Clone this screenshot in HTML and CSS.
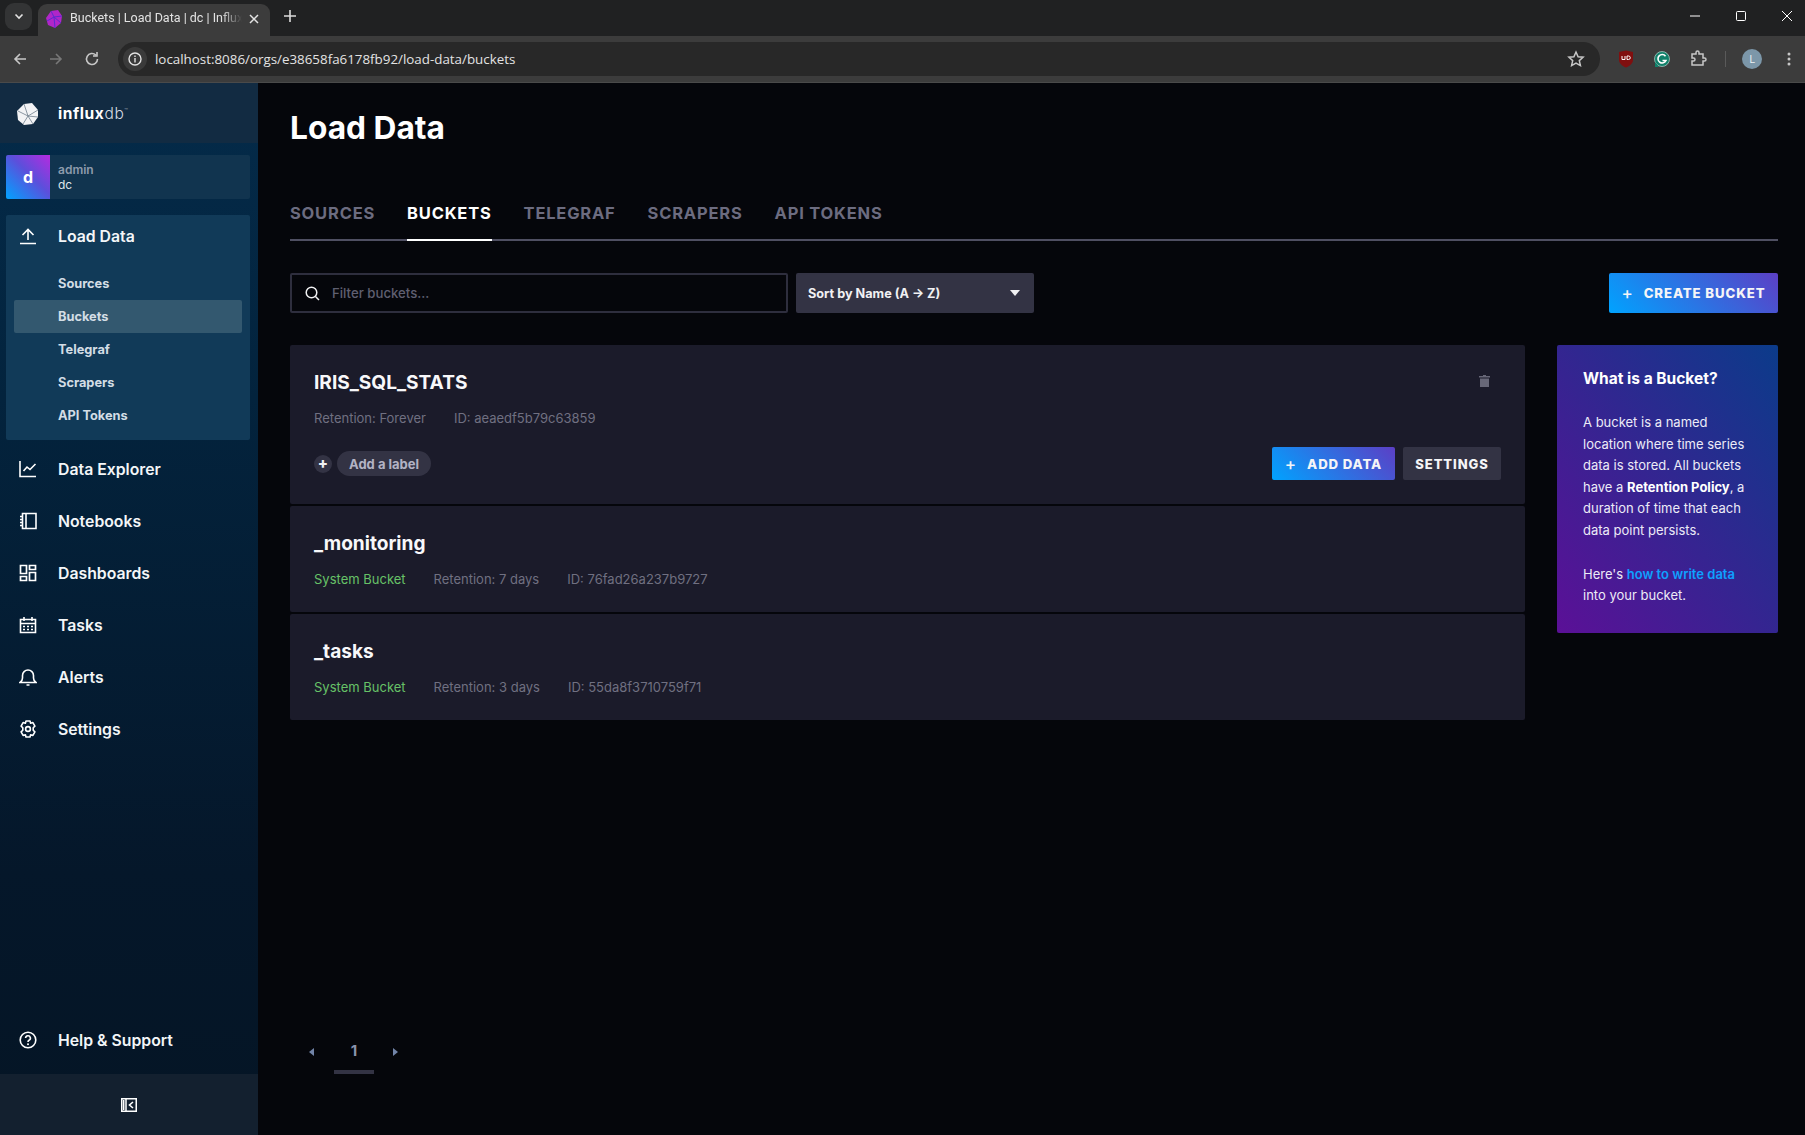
FILE: index.html
```html
<!DOCTYPE html>
<html lang="en">
<head>
    <meta charset="UTF-8">
    <title>Buckets | Load Data | dc | InfluxDB</title>
    <link rel="stylesheet" href="styles.css">
</head>
<body>
    <div class="browser">
        <div class="tabstrip">
            <div class="tab-search">
                <svg width="12" height="12" viewBox="0 0 12 12"><path d="M2.500 4.500 6 8l3.500-3.500" fill="none" stroke="#e3e3e3" stroke-width="1.600"/></svg>
            </div>
            <div class="tab">
                <svg class="favicon" width="17" height="18" viewBox="0 0 17 18"><path d="M5 1l7-1 4 6-1 7-6 5-7-3-2-7z" fill="#b026c9"/><path d="M5 1l3 6 8-1M8 7l-7 4M8 7l1 11M8 7l7 6" fill="none" stroke="#5a2bd0" stroke-width="1"/></svg>
                <span class="tab-title">Buckets | Load Data | dc | InfluxDB</span>
                <svg class="tab-close" width="12" height="12" viewBox="0 0 12 12"><path d="M2 2l8 8M10 2l-8 8" stroke="#e3e3e3" stroke-width="1.500"/></svg>
            </div>
            <svg class="new-tab" width="14" height="14" viewBox="0 0 14 14"><path d="M7 1v12M1 7h12" stroke="#dcdcdc" stroke-width="1.600"/></svg>
            <div class="window-controls">
                <svg width="12" height="12" viewBox="0 0 12 12"><path d="M1 6h10" stroke="#fff"/></svg>
                <svg width="12" height="12" viewBox="0 0 12 12"><rect x="1.500" y="1.500" width="9" height="9" rx="1" fill="none" stroke="#fff"/></svg>
                <svg width="12" height="12" viewBox="0 0 12 12"><path d="M1 1l10 10M11 1L1 11" stroke="#fff"/></svg>
            </div>
        </div>
        <div class="toolbar">
            <svg class="tool" width="16" height="16" viewBox="0 0 16 16"><path d="M14 8H3M8 3L3 8l5 5" fill="none" stroke="#c7c7c7" stroke-width="1.600"/></svg>
            <svg class="tool" width="16" height="16" viewBox="0 0 16 16"><path d="M2 8h11M8 3l5 5-5 5" fill="none" stroke="#787878" stroke-width="1.600"/></svg>
            <svg class="tool" width="16" height="16" viewBox="0 0 16 16"><path d="M13.500 8A5.500 5.500 0 1 1 11.800 4M13 1v4H9" fill="none" stroke="#c7c7c7" stroke-width="1.600"/></svg>
            <div class="urlbar">
                <span class="site-info">
                    <svg width="16" height="16" viewBox="0 0 16 16"><circle cx="8" cy="8" r="6" fill="none" stroke="#e3e3e3" stroke-width="1.400"/><path d="M8 7v4.500M8 4.500v1.400" stroke="#e3e3e3" stroke-width="1.400"/></svg>
                </span>
                <span class="url">localhost:8086/orgs/e38658fa6178fb92/load-data/buckets</span>
                <svg class="star" width="18" height="18" viewBox="0 0 18 18"><path d="M9 2l2.100 4.700 5 .5-3.800 3.400 1.100 5L9 13l-4.400 2.600 1.100-5L1.900 7.200l5-.5z" fill="none" stroke="#c7c7c7" stroke-width="1.500"/></svg>
            </div>
            <div class="extensions">
                <svg width="16" height="18" viewBox="0 0 16 18"><path d="M1 2l7-1.500L15 2v8c0 3.500-3.500 6-7 7.500C4.500 16 1 13.500 1 10z" fill="#800f0f"/><path d="M4 6v3.500h3V6M9 6v3.500h1.500a1.700 1.700 0 0 0 0-3.500z" fill="none" stroke="#fff" stroke-width="1"/></svg>
                <svg width="16" height="16" viewBox="0 0 16 16"><circle cx="8" cy="8" r="7.500" fill="#11806a" stroke="#cfe9e2" stroke-width=".6"/><path d="M11.500 5.200A4.200 4.200 0 1 0 12 9.500H8.500" fill="none" stroke="#fff" stroke-width="1.600"/><path d="M1 11l0 5h4z" fill="#11806a"/></svg>
                <svg width="17" height="17" viewBox="0 0 17 17"><path d="M2 4h4V2.500a1.500 1.500 0 0 1 3 0V4h4v4h1.500a1.500 1.500 0 0 1 0 3H13v4H2v-4h1.500a1.500 1.500 0 0 0 0-3H2z" fill="none" stroke="#c7c7c7" stroke-width="1.500"/></svg>
                <span class="toolbar-sep"></span>
                <span class="profile">L</span>
                <svg width="4" height="14" viewBox="0 0 4 14"><circle cx="2" cy="2" r="1.500" fill="#c7c7c7"/><circle cx="2" cy="7" r="1.500" fill="#c7c7c7"/><circle cx="2" cy="12" r="1.500" fill="#c7c7c7"/></svg>
            </div>
        </div>
    </div>

    <div class="app">
        <aside class="sidebar">
            <div class="brand">
                <svg width="22" height="22" viewBox="0 0 22 22"><path d="M7 1l8-1 6 7 0 7-5 7-9 1-6-5-1-9z" fill="#f2f3f5"/><path d="M7 1l4 12 10-6M11 13L1 8M11 13l-5 8M11 13l5 8M11 13l10 1" fill="none" stroke="#6f7d8b" stroke-width=".8"/></svg>
                <span class="brand-name"><b>influx</b>db<sup>™</sup></span>
            </div>
            <div class="org">
                <div class="org-avatar">d</div>
                <div class="org-text">
                    <span class="org-user">admin</span>
                    <span class="org-name">dc</span>
                </div>
            </div>
            <div class="nav-open">
                <div class="nav-item">
                    <svg width="18" height="18" viewBox="0 0 18 18"><path d="M9 13V2.500M3.500 8 9 2.500 14.500 8M1 16.500h16" fill="none" stroke="#fff" stroke-width="1.600"/></svg>
                    Load Data
                </div>
                <div class="sub-list">
                    <div class="sub-item">Sources</div>
                    <div class="sub-item active">Buckets</div>
                    <div class="sub-item">Telegraf</div>
                    <div class="sub-item">Scrapers</div>
                    <div class="sub-item">API Tokens</div>
                </div>
            </div>
            <nav class="nav-main">
                <div class="nav-item">
                    <svg width="18" height="18" viewBox="0 0 18 18"><path d="M1 1v15.500h16M4.500 11 8 7l3 2.500L16.500 4" fill="none" stroke="#fff" stroke-width="1.600"/></svg>
                    Data Explorer
                </div>
                <div class="nav-item">
                    <svg width="18" height="18" viewBox="0 0 18 18"><path d="M3.500 1.500h13.500v15H3.500zM7 1.500v15M1 4.500h3M1 7.500h3M1 10.500h3M1 13.500h3" fill="none" stroke="#fff" stroke-width="1.600"/></svg>
                    Notebooks
                </div>
                <div class="nav-item">
                    <svg width="18" height="18" viewBox="0 0 18 18"><path d="M1.500 1.500h6v8h-6zM10.500 1.500h6v4h-6zM10.500 8.500h6v8h-6zM1.500 12.500h6v4h-6z" fill="none" stroke="#fff" stroke-width="1.700"/></svg>
                    Dashboards
                </div>
                <div class="nav-item">
                    <svg width="18" height="18" viewBox="0 0 18 18"><path d="M1.500 3.500h15v13h-15zM1.500 7.500h15M5 1v4M13 1v4" fill="none" stroke="#fff" stroke-width="1.600"/><path d="M4 10.500h2M8 10.500h2M12 10.500h2M4 13.500h2M8 13.500h2M12 13.500h2" stroke="#fff" stroke-width="1.400"/></svg>
                    Tasks
                </div>
                <div class="nav-item">
                    <svg width="18" height="18" viewBox="0 0 18 18"><path d="M1 14.500h16c-1.500-1-2.500-2-2.500-4.500V7.500a5.500 5.500 0 0 0-11 0V10c0 2.500-1 3.500-2.500 4.500zM7.500 17h3" fill="none" stroke="#fff" stroke-width="1.600"/></svg>
                    Alerts
                </div>
                <div class="nav-item">
                    <svg width="18" height="18" viewBox="0 0 18 18"><path d="M7 1h4l.6 2.300 2.300-.7 2 3.500-1.700 1.700v2.400l1.700 1.700-2 3.500-2.300-.7L11 17H7l-.6-2.300-2.300.7-2-3.500 1.700-1.700V7.800L2.100 6.100l2-3.500 2.300.7z" fill="none" stroke="#fff" stroke-width="1.600" stroke-linejoin="round"/><circle cx="9" cy="9" r="2.400" fill="none" stroke="#fff" stroke-width="1.600"/></svg>
                    Settings
                </div>
            </nav>
            <div class="nav-help nav-item">
                <svg width="18" height="18" viewBox="0 0 18 18"><circle cx="9" cy="9" r="7.800" fill="none" stroke="#fff" stroke-width="1.600"/><path d="M6.600 7a2.400 2.400 0 1 1 3.400 2.300c-.7.400-1 .8-1 1.700" fill="none" stroke="#fff" stroke-width="1.600"/><circle cx="9" cy="13.300" r="1" fill="#fff"/></svg>
                Help &amp; Support
            </div>
            <div class="collapse">
                <svg width="16" height="14" viewBox="0 0 16 14"><path d="M.75.75h14.500v12.500H.75zM5 1v12" fill="none" stroke="#fff" stroke-width="1.500"/><path d="M2.700 2v10" stroke="#fff" stroke-width="1.500"/><path d="M12 4 8.500 7l3.500 3" fill="none" stroke="#fff" stroke-width="1.600"/></svg>
            </div>
        </aside>

        <main class="main">
            <h1 class="page-title">Load Data</h1>
            <div class="tabs">
                <span class="tabs-item">Sources</span>
                <span class="tabs-item active">Buckets</span>
                <span class="tabs-item">Telegraf</span>
                <span class="tabs-item">Scrapers</span>
                <span class="tabs-item">API Tokens</span>
            </div>

            <div class="filters">
                <div class="search">
                    <svg width="15" height="15" viewBox="0 0 15 15"><circle cx="6.500" cy="6.500" r="5.300" fill="none" stroke="#f1f1f3" stroke-width="1.500"/><path d="M10.500 10.500 14 14" stroke="#f1f1f3" stroke-width="1.500"/></svg>
                    <span>Filter buckets...</span>
                </div>
                <div class="sort">
                    <span>Sort by Name (A → Z)</span>
                    <svg width="10" height="6" viewBox="0 0 10 6"><path d="M0 0h10L5 6z" fill="#f1f1f3"/></svg>
                </div>
                <button class="btn btn-primary btn-create"><span class="plus">+</span>Create Bucket</button>
            </div>

            <div class="content">
                <div class="bucket-list">
                    <div class="bucket">
                        <div class="bucket-head">
                            <div class="bucket-name">IRIS_SQL_STATS</div>
                            <svg class="trash" width="11" height="12" viewBox="0 0 11 12"><path d="M4 0h3v1h4v1.500H0V1h4zM1 3.500h9V12H1z" fill="#676777"/></svg>
                        </div>
                        <div class="bucket-meta">
                            <span>Retention: Forever</span>
                            <span>ID: aeaedf5b79c63859</span>
                        </div>
                        <div class="bucket-actions">
                            <span class="label-add">+</span>
                            <span class="label-pill">Add a label</span>
                            <button class="btn btn-primary btn-add"><span class="plus">+</span>Add Data</button>
                            <button class="btn btn-dark">Settings</button>
                        </div>
                    </div>
                    <div class="bucket">
                        <div class="bucket-name">_monitoring</div>
                        <div class="bucket-meta">
                            <span class="system">System Bucket</span>
                            <span>Retention: 7 days</span>
                            <span>ID: 76fad26a237b9727</span>
                        </div>
                    </div>
                    <div class="bucket">
                        <div class="bucket-name">_tasks</div>
                        <div class="bucket-meta">
                            <span class="system">System Bucket</span>
                            <span>Retention: 3 days</span>
                            <span>ID: 55da8f3710759f71</span>
                        </div>
                    </div>
                </div>
                <div class="info-panel">
                    <h5>What is a Bucket?</h5>
                    <p>A bucket is a named location where time series data is stored. All buckets have a <b>Retention Policy</b>, a duration of time that each data point persists.</p>
                    <p>Here's <a href="#">how to write data</a> into your bucket.</p>
                </div>
            </div>

            <div class="pagination">
                <span class="page-arrow"><svg width="5" height="8" viewBox="0 0 5 8"><path d="M5 0v8L0 4z" fill="#7284a8"/></svg></span>
                <span class="page-num">1</span>
                <span class="page-arrow"><svg width="5" height="8" viewBox="0 0 5 8"><path d="M0 0v8l5-4z" fill="#7284a8"/></svg></span>
            </div>
        </main>
    </div>
</body>
</html>
```

FILE: styles.css
```css
* {
    box-sizing: border-box;
}
html, body {
    height: 100%;
}
body {
    margin: 0;
    display: flex;
    flex-direction: column;
    background: #05060b;
    color: #fff;
    font-family: Inter, "Liberation Sans", sans-serif;
    overflow: hidden;
}

/* browser chrome */
.browser {
    flex: none;
    font-family: "Open Sans", "Liberation Sans", sans-serif;
}
.tabstrip {
    height: 36px;
    display: flex;
    align-items: center;
    padding-bottom: 4px;
    background: #202122;
}
.tab-search {
    width: 27px;
    height: 27px;
    margin: 0 0 0 5px;
    display: flex;
    align-items: center;
    justify-content: center;
    background: #333435;
    border-radius: 9px;
}
.tab {
    width: 232px;
    height: 34px;
    margin: 6px 0 -4px 6px;
    padding: 0 10px 5px 8px;
    display: flex;
    align-items: center;
    background: #3c3c3c;
    border-radius: 9px 9px 0 0;
}
.favicon {
    flex: none;
}
.tab-title {
    flex: 1;
    margin-left: 7px;
    padding-bottom: 2px;
    overflow: hidden;
    white-space: nowrap;
    font-family: Roboto, sans-serif;
    font-size: 12.5px;
    color: #e3e3e3;
    -webkit-mask-image: linear-gradient(to right, #000 88%, transparent);
    mask-image: linear-gradient(to right, #000 88%, transparent);
}
.tab-close {
    flex: none;
    margin-left: 6px;
}
.new-tab {
    margin-left: 13px;
}
.window-controls {
    margin-left: auto;
    padding-right: 12px;
    display: flex;
    gap: 34px;
}
.toolbar {
    height: 47px;
    display: flex;
    align-items: center;
    padding: 0 0 1px 12px;
    background: #3c3c3c;
    border-bottom: 1px solid #4a4a4a;
}
.tool {
    margin-right: 20px;
}
.urlbar {
    width: 1482px;
    height: 34px;
    margin-left: -2px;
    padding: 0 15px 0 5px;
    display: flex;
    align-items: center;
    background: #282828;
    border-radius: 17px;
}
.site-info {
    width: 24px;
    height: 24px;
    display: flex;
    align-items: center;
    justify-content: center;
    background: #3a3a3a;
    border-radius: 50%;
}
.url {
    margin-left: 8px;
    font-size: 13.37px;
    color: #e3e3e3;
}
.star {
    margin-left: auto;
}
.extensions {
    flex: 1;
    display: flex;
    align-items: center;
    padding-left: 18px;
    gap: 20px;
}
.toolbar-sep {
    width: 1px;
    height: 16px;
    margin: 0 -3px 0 -2px;
    background: #5a5a5a;
}
.profile {
    width: 20px;
    height: 20px;
    margin: 0 5px 0 -1px;
    display: flex;
    align-items: center;
    justify-content: center;
    border-radius: 50%;
    background: #7c97a9;
    font-size: 11px;
    color: #eef2f5;
}

/* app */
.app {
    flex: 1;
    min-height: 0;
    display: flex;
}
.sidebar {
    width: 258px;
    flex: none;
    display: flex;
    flex-direction: column;
    background: linear-gradient(to bottom, #042b4a 0%, #03233d 30%, #05172a 75%, #051525 100%);
}
.brand {
    height: 60px;
    flex: none;
    display: flex;
    align-items: center;
    gap: 19px;
    padding-left: 17px;
    background: #122b42;
}
.brand svg {
    margin-top: 2px;
}
.brand-name {
    font-size: 15.5px;
    letter-spacing: 0.6px;
    color: #d7dde3;
    font-weight: 300;
}
.brand-name b {
    font-weight: 700;
    color: #fff;
}
.brand-name sup {
    font-size: 6px;
    color: #9aa6b2;
}
.org {
    height: 44px;
    margin: 12px 8px 16px 6px;
    display: flex;
    background: #11344f;
    border-radius: 2px;
}
.org-avatar {
    width: 44px;
    display: flex;
    align-items: center;
    justify-content: center;
    background: linear-gradient(45deg, #00a3ff, #5c4fdb 55%, #b52be0);
    border-radius: 2px 0 0 2px;
    font-size: 16px;
    font-weight: 700;
}
.org-text {
    margin-left: 8px;
    display: flex;
    flex-direction: column;
    justify-content: center;
    font-size: 12px;
    line-height: 15px;
}
.org-user {
    color: #8d9bac;
    font-weight: 600;
}
.org-name {
    color: #dfe5ea;
}
.nav-open {
    margin: 0 8px 0 6px;
    padding-bottom: 8px;
    background: #113a58;
    border-radius: 2px;
}
.nav-open > .nav-item {
    height: 42px;
    padding-left: 13px;
}
.nav-item {
    height: 52px;
    flex: none;
    display: flex;
    align-items: center;
    gap: 21px;
    padding-left: 19px;
    font-size: 15.8px;
    font-weight: 600;
    color: #f3f6f8;
}
.nav-item svg {
    flex: none;
}
.sub-list {
    margin-top: 10px;
}
.sub-item {
    height: 33px;
    margin: 0 8px;
    padding-left: 44px;
    display: flex;
    align-items: center;
    border-radius: 2px;
    font-size: 12.8px;
    font-weight: 700;
    color: #d3dde5;
}
.sub-item.active {
    background: #33586f;
}
.nav-main {
    margin-top: 3px;
    flex: 1;
}
.nav-help {
    margin-bottom: 8px;
}
.collapse {
    height: 61px;
    flex: none;
    display: flex;
    align-items: center;
    justify-content: center;
    background: #13202f;
}

/* page */
.main {
    flex: 1;
    min-width: 0;
    padding: 0 27px 61px 32px;
    display: flex;
    flex-direction: column;
}
.page-title {
    margin: 23px 0 0;
    height: 44px;
    font-size: 31.7px;
    line-height: 44px;
    font-weight: 700;
    color: #fff;
}
.tabs {
    margin-top: 37px;
    height: 54px;
    flex: none;
    display: flex;
    gap: 32px;
    border-bottom: 2px solid #4f4f62;
}
.tabs-item {
    height: 54px;
    padding-top: 5px;
    line-height: 42px;
    font-size: 16.5px;
    font-weight: 700;
    letter-spacing: 0.8px;
    text-transform: uppercase;
    color: #6c6c80;
}
.tabs-item.active {
    color: #fff;
    border-bottom: 2px solid #fff;
}
.filters {
    margin-top: 32px;
    flex: none;
    display: flex;
    gap: 8px;
}
.search {
    width: 498px;
    height: 40px;
    padding-left: 13px;
    display: flex;
    align-items: center;
    gap: 12px;
    border: 2px solid #2e2e3e;
    border-radius: 2px;
    background: #05060b;
    font-size: 13.2px;
    font-weight: 500;
    color: #5f5f70;
}
.sort {
    width: 238px;
    height: 40px;
    padding: 0 14px 0 12px;
    display: flex;
    align-items: center;
    justify-content: space-between;
    background: #333344;
    border-radius: 2px;
    font-size: 12.7px;
    font-weight: 700;
    color: #f1f1f3;
}
.btn {
    border: none;
    border-radius: 2px;
    display: flex;
    align-items: center;
    justify-content: center;
    font-family: inherit;
    font-weight: 800;
    letter-spacing: 0.9px;
    text-transform: uppercase;
    color: #f5f5f7;
}
.btn-primary {
    background: linear-gradient(45deg, #00a3ff, #5c3fc5);
}
.btn-dark {
    width: 98px;
    height: 33px;
    margin-left: 8px;
    background: #333344;
    font-size: 13px;
}
.plus {
    margin-right: 10px;
    font-size: 17px;
    font-weight: 500;
}
.btn-create {
    width: 169px;
    height: 40px;
    margin-left: auto;
    font-size: 13.2px;
}
.btn-add {
    width: 123px;
    height: 33px;
    margin-left: auto;
    font-size: 13.2px;
}
.content {
    flex: 1;
    margin-top: 32px;
    display: flex;
    align-items: flex-start;
    gap: 32px;
}
.bucket-list {
    flex: 1;
    display: flex;
    flex-direction: column;
    gap: 2px;
}
.bucket {
    min-height: 106px;
    padding: 24px 24px 0;
    background: #1b1b2a;
    border-radius: 2px;
}
.bucket-head {
    display: flex;
    justify-content: space-between;
    align-items: flex-start;
}
.bucket-name {
    height: 28px;
    line-height: 26px;
    font-size: 19.1px;
    font-weight: 700;
    color: #f8f8fa;
}
.trash {
    margin: 6px 11px 0 0;
}
.bucket-meta {
    margin-top: 12px;
    display: flex;
    gap: 28px;
    font-size: 13px;
    line-height: 18px;
    color: #707081;
}
.system {
    color: #67c267;
}
.bucket-actions {
    margin: 20px 0 0;
    padding-bottom: 24px;
    display: flex;
    align-items: center;
}
.label-add {
    width: 18px;
    height: 18px;
    margin-right: 5px;
    display: flex;
    align-items: center;
    justify-content: center;
    border-radius: 50%;
    background: #333344;
    font-size: 15px;
    font-weight: 800;
    color: #f1f1f3;
}
.label-pill {
    height: 25px;
    padding: 0 12px;
    display: flex;
    align-items: center;
    border-radius: 13px;
    background: #333344;
    font-size: 13px;
    font-weight: 700;
    color: #b3b3c4;
}
.info-panel {
    width: 221px;
    height: 288px;
    flex: none;
    padding: 23px 20px 0 26px;
    background: linear-gradient(to top right, #5b1097, #0b3b8a);
    border-radius: 2px;
    font-size: 13px;
    line-height: 21.6px;
    color: #ecebf7;
}
.info-panel h5 {
    margin: 0 0 22px;
    font-size: 15.5px;
    line-height: 22px;
    font-weight: 700;
    color: #fff;
}
.info-panel p {
    margin: 0 0 22px;
}
.info-panel b {
    color: #fff;
}
.info-panel a {
    color: #0ea0ff;
    font-weight: 600;
    text-decoration: none;
}
.pagination {
    height: 46px;
    flex: none;
    display: flex;
    align-items: stretch;
}
.page-arrow {
    width: 42px;
    padding-top: 2px;
    display: flex;
    align-items: center;
    justify-content: center;
}
.page-num {
    width: 40px;
    margin-left: 2px;
    padding-top: 2px;
    display: flex;
    align-items: center;
    justify-content: center;
    border-bottom: 4px solid #333344;
    font-size: 15px;
    font-weight: 700;
    color: #8a93ad;
}
```
